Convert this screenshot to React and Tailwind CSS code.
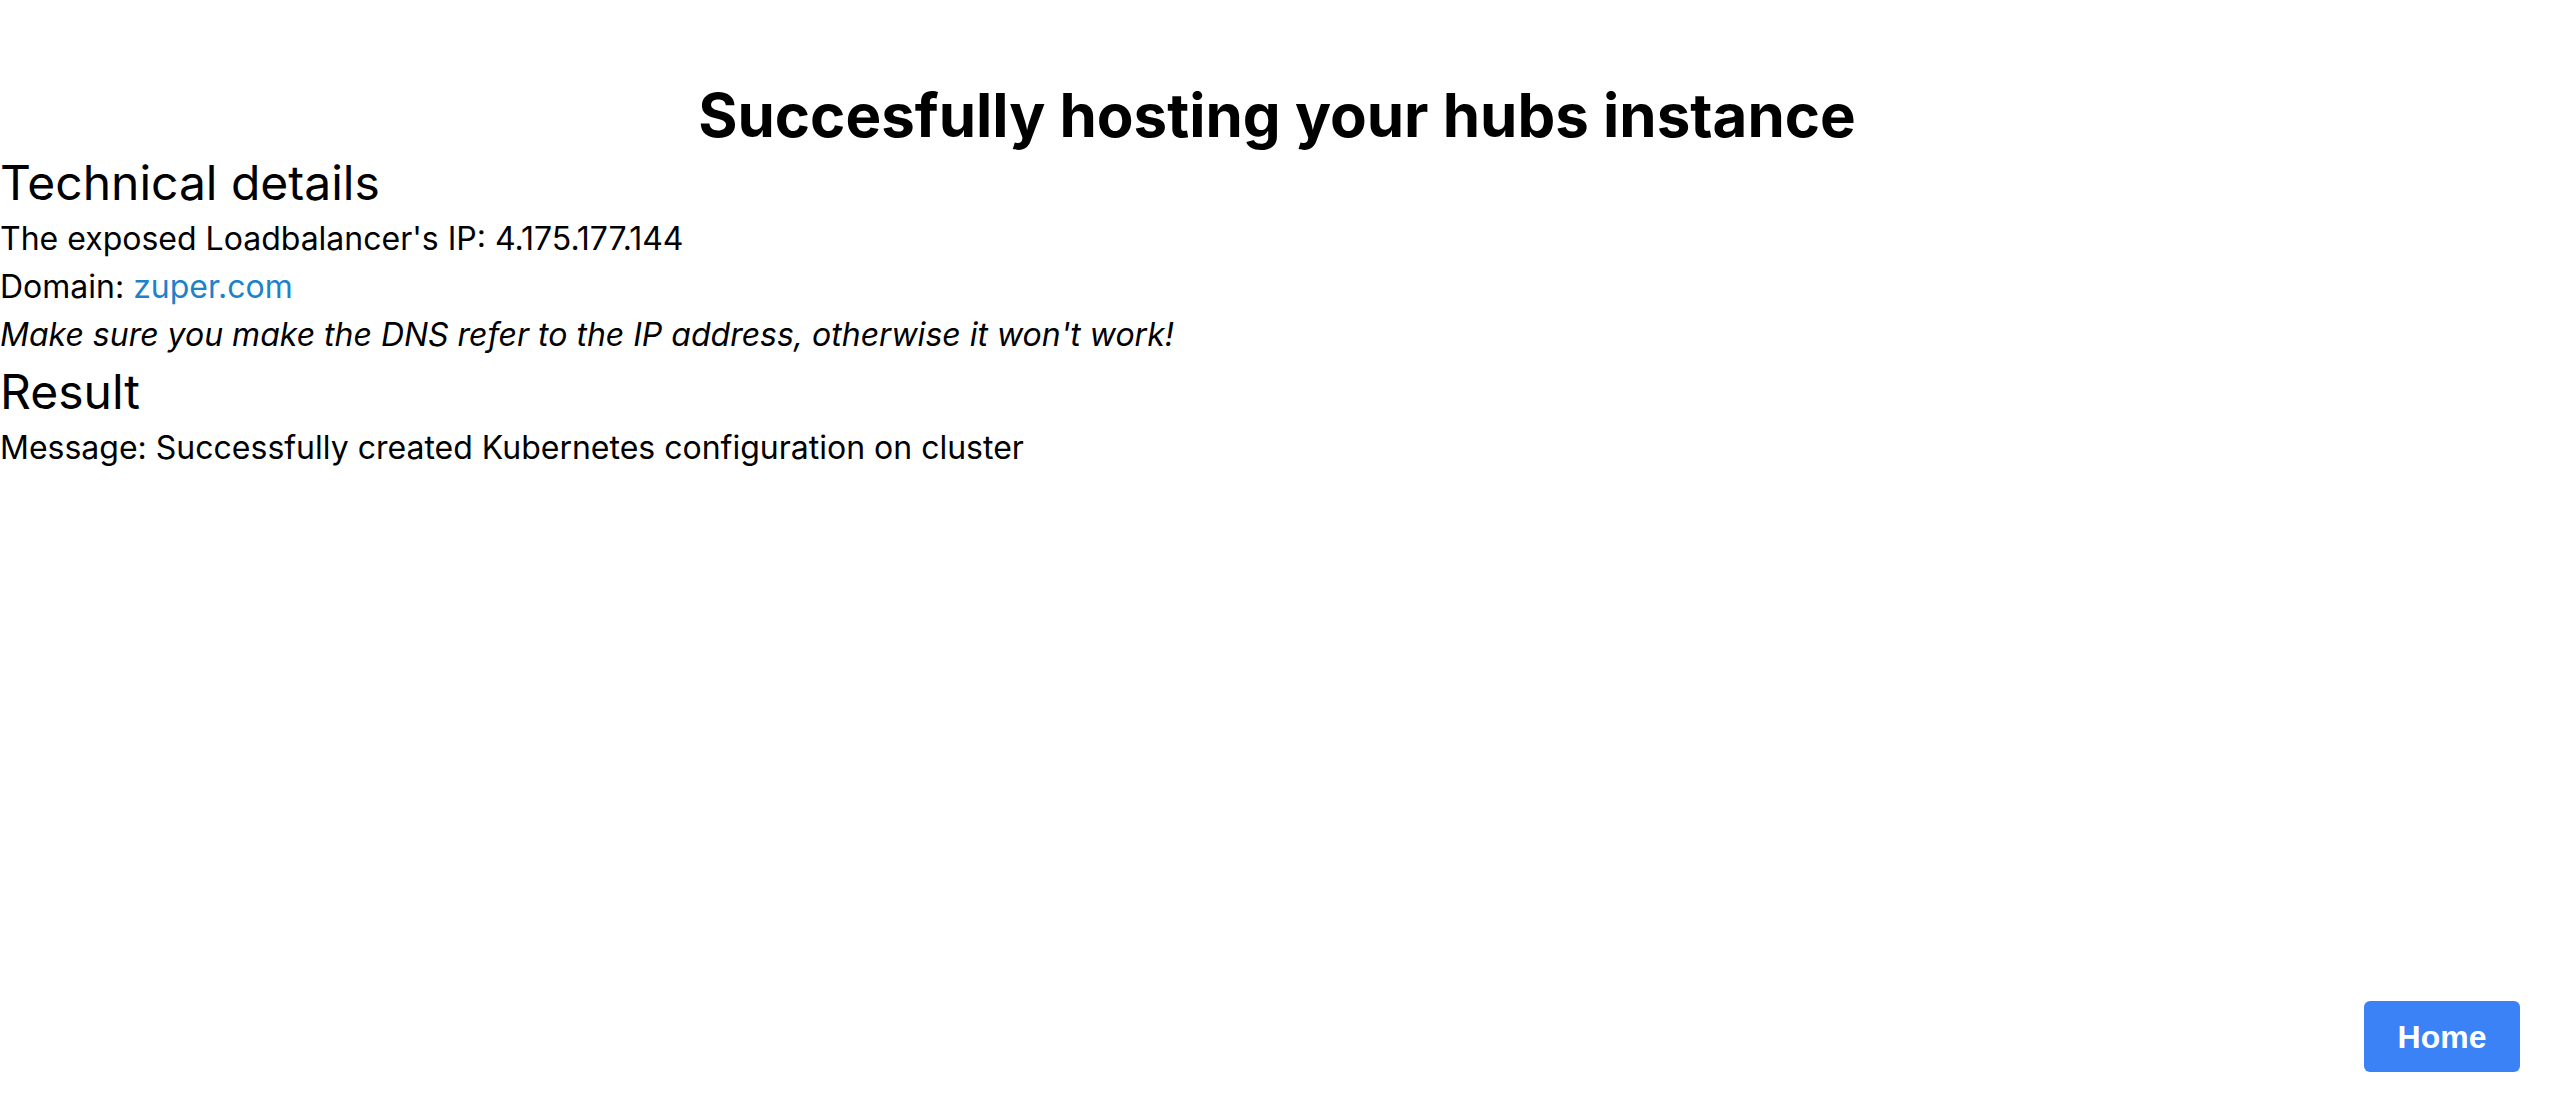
export default function App() {
  const ip = "4.175.177.144";
  const domain = "zuper.com";

  return (
    <div className="min-h-screen flex flex-col bg-white text-black font-['Inter','Noto_Sans',sans-serif]">
      <main className="flex flex-col">
        <h1 className="mt-[85px] text-center text-[60px] leading-[60px] font-bold">
          Succesfully hosting your hubs instance
        </h1>

        <h2 className="mt-[6px] text-[48px] leading-[64px] font-normal">
          Technical details
        </h2>
        <p className="text-[32px] leading-[48px]">
          The exposed Loadbalancer's IP: {ip}
        </p>
        <p className="text-[32px] leading-[48px]">
          Domain:{" "}
          <a href="#" className="text-[#1d82c9]">
            {domain}
          </a>
        </p>
        <p className="text-[32px] leading-[48px] italic">
          Make sure you make the DNS refer to the IP address, otherwise it won't work!
        </p>

        <h2 className="mt-[1px] text-[48px] leading-[64px] font-normal">Result</h2>
        <p className="text-[32px] leading-[48px]">
          Message: Successfully created Kubernetes configuration on cluster
        </p>
      </main>

      <div className="mt-auto flex justify-end pr-[34px] pb-[27px]">
        <button
          type="button"
          className="w-[156px] h-[71px] flex items-center justify-center rounded-md bg-[#3b82f6] text-white text-[32px] font-bold font-['Liberation_Sans','Arial',sans-serif]"
        >
          Home
        </button>
      </div>
    </div>
  );
}
